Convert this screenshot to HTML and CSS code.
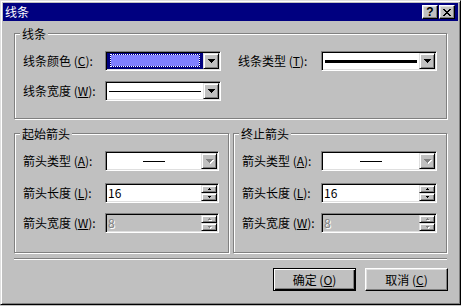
FILE: index.html
```html
<!DOCTYPE html>
<html>
<head>
    <meta charset="utf-8">
    <title>线条</title>
    <link rel="stylesheet" href="styles.css">
</head>
<body>
    <div class="window">
        <div class="titlebar">
            <span class="title">线条</span>
            <div class="caption-buttons">
                <button class="caption-btn help">?</button>
                <button class="caption-btn close">
                    <svg width="8" height="7" viewBox="0 0 8 7"><path d="M0 0h2v1H0zM6 0h2v1H6zM1 1h2v1H1zM5 1h2v1H5zM2 2h4v1H2zM3 3h2v1H3zM2 4h4v1H2zM1 5h2v1H1zM5 5h2v1H5zM0 6h2v1H0zM6 6h2v1H6z"/></svg>
                </button>
            </div>
        </div>

        <div class="dialog-body">
            <!-- line settings -->
            <fieldset class="group">
                <legend>线条</legend>
                <div class="group-body line-grid">
                    <div class="field">
                        <label>线条颜色 (<u>C</u>):</label>
                        <div class="combo">
                            <div class="combo-value selected"><div class="focus"></div></div>
                            <span class="drop-btn"><svg width="7" height="4" viewBox="0 0 7 4"><path d="M0 0h7v1H0zM1 1h5v1H1zM2 2h3v1H2zM3 3h1v1H3z"/></svg></span>
                        </div>
                    </div>
                    <div class="field wide">
                        <label>线条类型 (<u>T</u>):</label>
                        <div class="combo">
                            <div class="combo-value"><div class="line thick"></div></div>
                            <span class="drop-btn"><svg width="7" height="4" viewBox="0 0 7 4"><path d="M0 0h7v1H0zM1 1h5v1H1zM2 2h3v1H2zM3 3h1v1H3z"/></svg></span>
                        </div>
                    </div>
                    <div class="field">
                        <label>线条宽度 (<u>W</u>):</label>
                        <div class="combo">
                            <div class="combo-value"><div class="line"></div></div>
                            <span class="drop-btn"><svg width="7" height="4" viewBox="0 0 7 4"><path d="M0 0h7v1H0zM1 1h5v1H1zM2 2h3v1H2zM3 3h1v1H3z"/></svg></span>
                        </div>
                    </div>
                </div>
            </fieldset>

            <!-- arrows -->
            <div class="arrow-groups">
                <fieldset class="group">
                    <legend>起始箭头</legend>
                    <div class="group-body arrow-body">
                        <div class="field">
                            <label>箭头类型 (<u>A</u>):</label>
                            <div class="combo disabled">
                                <div class="combo-value center"><div class="line short"></div></div>
                                <span class="drop-btn"><svg width="7" height="4" viewBox="0 0 7 4"><path d="M0 0h7v1H0zM1 1h5v1H1zM2 2h3v1H2zM3 3h1v1H3z"/></svg></span>
                            </div>
                        </div>
                        <div class="field">
                            <label>箭头长度 (<u>L</u>):</label>
                            <div class="spin">
                                <div class="spin-value">16</div>
                                <div class="spin-btns">
                                    <span class="spin-btn"><svg width="3" height="2" viewBox="0 0 3 2"><path d="M1 0h1v1H1zM0 1h3v1H0z"/></svg></span>
                                    <span class="spin-btn"><svg width="3" height="2" viewBox="0 0 3 2"><path d="M0 0h3v1H0zM1 1h1v1H1z"/></svg></span>
                                </div>
                            </div>
                        </div>
                        <div class="field">
                            <label class="muted">箭头宽度 (<u>W</u>):</label>
                            <div class="spin disabled">
                                <div class="spin-value">8</div>
                                <div class="spin-btns">
                                    <span class="spin-btn"><svg width="3" height="2" viewBox="0 0 3 2"><path d="M1 0h1v1H1zM0 1h3v1H0z"/></svg></span>
                                    <span class="spin-btn"><svg width="3" height="2" viewBox="0 0 3 2"><path d="M0 0h3v1H0zM1 1h1v1H1z"/></svg></span>
                                </div>
                            </div>
                        </div>
                    </div>
                </fieldset>

                <fieldset class="group end-group">
                    <legend>终止箭头</legend>
                    <div class="group-body arrow-body">
                        <div class="field">
                            <label>箭头类型 (<u>A</u>):</label>
                            <div class="combo disabled">
                                <div class="combo-value center"><div class="line short"></div></div>
                                <span class="drop-btn"><svg width="7" height="4" viewBox="0 0 7 4"><path d="M0 0h7v1H0zM1 1h5v1H1zM2 2h3v1H2zM3 3h1v1H3z"/></svg></span>
                            </div>
                        </div>
                        <div class="field">
                            <label>箭头长度 (<u>L</u>):</label>
                            <div class="spin">
                                <div class="spin-value">16</div>
                                <div class="spin-btns">
                                    <span class="spin-btn"><svg width="3" height="2" viewBox="0 0 3 2"><path d="M1 0h1v1H1zM0 1h3v1H0z"/></svg></span>
                                    <span class="spin-btn"><svg width="3" height="2" viewBox="0 0 3 2"><path d="M0 0h3v1H0zM1 1h1v1H1z"/></svg></span>
                                </div>
                            </div>
                        </div>
                        <div class="field">
                            <label class="muted">箭头宽度 (<u>W</u>):</label>
                            <div class="spin disabled">
                                <div class="spin-value">8</div>
                                <div class="spin-btns">
                                    <span class="spin-btn"><svg width="3" height="2" viewBox="0 0 3 2"><path d="M1 0h1v1H1zM0 1h3v1H0z"/></svg></span>
                                    <span class="spin-btn"><svg width="3" height="2" viewBox="0 0 3 2"><path d="M0 0h3v1H0zM1 1h1v1H1z"/></svg></span>
                                </div>
                            </div>
                        </div>
                    </div>
                </fieldset>
            </div>

            <div class="separator"></div>

            <div class="actions">
                <button class="btn default">确定 (<u>O</u>)</button>
                <button class="btn">取消 (<u>C</u>)</button>
            </div>
        </div>
    </div>
</body>
</html>
```

FILE: styles.css
```css
* {
    box-sizing: border-box;
}
html, body {
    margin: 0;
    padding: 0;
    background: #c0c0c0;
}
body {
    font-family: "Noto Sans CJK SC", "Noto Sans", sans-serif;
    font-size: 12px;
    color: #000;
}

/* window frame */
.window {
    width: 461px;
    height: 305px;
    border: 1px solid;
    border-color: #dfdfdf #000 #000 #dfdfdf;
    box-shadow: inset 1px 1px 0 #fff, inset -1px -1px 0 #808080;
    padding: 2px;
    background: #c0c0c0;
}
.titlebar {
    height: 18px;
    background: #000080;
    color: #fff;
    display: flex;
    align-items: center;
    justify-content: space-between;
    padding: 0 3px 0 2px;
}
.title {
    line-height: 14px;
}
.caption-buttons {
    display: flex;
    gap: 1px;
}
.caption-btn {
    width: 16px;
    height: 14px;
    padding: 0;
    border: 1px solid;
    border-color: #fff #000 #000 #fff;
    box-shadow: inset -1px -1px 0 #808080, inset 1px 1px 0 #dfdfdf;
    background: #c0c0c0;
    display: flex;
    align-items: center;
    justify-content: center;
    font: bold 12px "Liberation Sans", sans-serif;
    line-height: 12px;
    color: #000;
}

.dialog-body {
    padding: 6px 11px 0 11px;
}

/* etched group boxes */
.group {
    margin: 0;
    padding: 0;
    min-width: 0;
    border: 1px solid #808080;
    box-shadow: 1px 1px 0 #fff, inset 1px 1px 0 #fff;
}
.group legend {
    margin-left: 5px;
    padding: 0 2px;
    height: 13px;
    line-height: 13px;
    background: #c0c0c0;
}
.group-body {
    padding: 11px 9px 17px 8px;
}
.line-grid {
    display: grid;
    grid-template-columns: 198px 199px;
    column-gap: 17px;
    row-gap: 10px;
}
.arrow-groups {
    display: grid;
    grid-template-columns: 215px 214px;
    column-gap: 4px;
    margin-top: 8px;
}
.arrow-body {
    display: flex;
    flex-direction: column;
    gap: 10px;
    padding-bottom: 19px;
}
.arrow-body .field:first-child {
    margin-bottom: 2px;
}

.field {
    display: flex;
    align-items: center;
    height: 20px;
}
.field label {
    flex: none;
    width: 82px;
    white-space: nowrap;
    line-height: 14px;
}
.field.wide label {
    width: 83px;
}
.end-group .field label {
    width: 79px;
}

/* sunken controls */
.combo, .spin {
    width: 116px;
    height: 20px;
    display: flex;
    padding: 1px;
    border: 1px solid;
    border-color: #808080 #fff #fff #808080;
    box-shadow: inset 1px 1px 0 #000, inset -1px -1px 0 #dfdfdf;
    background: #fff;
}
.combo-value {
    flex: 1;
    display: flex;
    align-items: center;
    padding: 0 2px;
}
.combo-value.center {
    justify-content: center;
}
.combo-value.selected {
    background: #000080;
    padding: 1px 3px 2px 3px;
    align-items: stretch;
}
.focus {
    flex: 1;
    border: 1px dotted #fff;
    background: #8080ff;
    background-clip: padding-box;
}
.line {
    flex: 1;
    height: 1px;
    background: #000;
}
.line.thick {
    height: 3px;
}
.line.short {
    flex: none;
    width: 22px;
}
.drop-btn, .spin-btn {
    flex: none;
    display: flex;
    align-items: center;
    justify-content: center;
    background: #c0c0c0;
    border: 1px solid;
    border-color: #dfdfdf #000 #000 #dfdfdf;
    box-shadow: inset 1px 1px 0 #fff, inset -1px -1px 0 #808080;
}
.drop-btn {
    width: 16px;
    height: 16px;
}
.disabled .drop-btn svg,
.spin.disabled .spin-btn svg {
    fill: #808080;
    filter: drop-shadow(1px 1px 0 #fff);
}

.spin-value {
    flex: 1;
    padding-left: 1px;
    line-height: 16px;
}
.spin-btns {
    width: 16px;
    display: flex;
    flex-direction: column;
}
.spin-btn {
    height: 8px;
}
.spin.disabled {
    background: #c0c0c0;
}
.spin.disabled .spin-value {
    color: #808080;
    text-shadow: 1px 1px 0 #fff;
}

.separator {
    height: 2px;
    margin-top: 5px;
    border-top: 1px solid #808080;
    border-bottom: 1px solid #fff;
}

.actions {
    display: flex;
    justify-content: flex-end;
    gap: 9px;
    margin-top: 8px;
    margin-right: -1px;
}
.btn {
    width: 83px;
    height: 23px;
    padding: 0;
    font: inherit;
    color: #000;
    background: #c0c0c0;
    border: 1px solid;
    border-color: #fff #000 #000 #fff;
    box-shadow: inset -1px -1px 0 #808080, inset 1px 1px 0 #dfdfdf;
}
.btn.default {
    border-color: #000;
    box-shadow: inset 1px 1px 0 #fff, inset -1px -1px 0 #000, inset -2px -2px 0 #808080;
}
```
